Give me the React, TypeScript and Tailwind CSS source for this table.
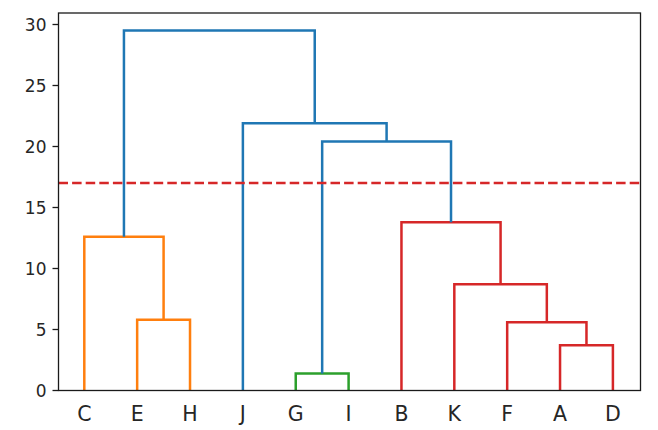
const BLUE = "#1f77b4";
const ORANGE = "#ff7f0e";
const GREEN = "#2ca02c";
const RED = "#d62728";

const X0 = 58.5;
const X1 = 640.5;
const Y_TOP = 13;
const Y_ZERO = 390.5;
const PX_PER_UNIT = 12.2;

const leaves = ["C", "E", "H", "J", "G", "I", "B", "K", "F", "A", "D"];
const lx = (i: number) => 84.3 + i * 52.86;
const ly = (v: number) => Y_ZERO - v * PX_PER_UNIT;

type Link = { x: [number, number, number, number]; y: [number, number, number, number]; color: string };

// scipy-style U links: left leg bottom, left top, right top, right bottom
const mid = (a: number, b: number) => (a + b) / 2;
const eh = mid(lx(1), lx(2));
const cGroup = mid(lx(0), eh);
const gi = mid(lx(4), lx(5));
const ad = mid(lx(9), lx(10));
const fad = mid(lx(8), ad);
const kfad = mid(lx(7), fad);
const red = mid(lx(6), kfad);
const giRed = mid(gi, red);
const jGroup = mid(lx(3), giRed);

const links: Link[] = [
	{ x: [lx(1), lx(1), lx(2), lx(2)], y: [0, 5.8, 5.8, 0], color: ORANGE },
	{ x: [lx(0), lx(0), eh, eh], y: [0, 12.6, 12.6, 5.8], color: ORANGE },
	{ x: [lx(4), lx(4), lx(5), lx(5)], y: [0, 1.4, 1.4, 0], color: GREEN },
	{ x: [lx(9), lx(9), lx(10), lx(10)], y: [0, 3.7, 3.7, 0], color: RED },
	{ x: [lx(8), lx(8), ad, ad], y: [0, 5.6, 5.6, 3.7], color: RED },
	{ x: [lx(7), lx(7), fad, fad], y: [0, 8.7, 8.7, 5.6], color: RED },
	{ x: [lx(6), lx(6), kfad, kfad], y: [0, 13.8, 13.8, 8.7], color: RED },
	{ x: [gi, gi, red, red], y: [1.4, 20.4, 20.4, 13.8], color: BLUE },
	{ x: [lx(3), lx(3), giRed, giRed], y: [0, 21.9, 21.9, 20.4], color: BLUE },
	{ x: [cGroup, cGroup, jGroup, jGroup], y: [12.6, 29.5, 29.5, 21.9], color: BLUE },
];

const yTicks = [0, 5, 10, 15, 20, 25, 30];

export default function App() {
	return (
		<div className="h-[430px] w-[658px] bg-white">
			<svg
				width={658}
				height={430}
				viewBox="0 0 658 430"
				className="block font-['DejaVu_Sans',sans-serif]"
			>
				{links.map((l, i) => (
					<polyline
						key={i}
						points={l.x.map((x, k) => `${x},${ly(l.y[k])}`).join(" ")}
						fill="none"
						stroke={l.color}
						strokeWidth={2.5}
						strokeLinejoin="miter"
						strokeLinecap="butt"
					/>
				))}

				{/* cut threshold */}
				<line
					x1={X0}
					x2={X1}
					y1={ly(17)}
					y2={ly(17)}
					stroke={RED}
					strokeWidth={2.5}
					strokeDasharray="9.5 4.1"
				/>

				{/* axes frame */}
				<rect
					x={X0}
					y={Y_TOP}
					width={X1 - X0}
					height={Y_ZERO - Y_TOP}
					fill="none"
					stroke="#1a1a1a"
					strokeWidth={1.3}
				/>

				{yTicks.map((t) => (
					<g key={t}>
						<line x1={X0 - 6} x2={X0} y1={ly(t)} y2={ly(t)} stroke="#1a1a1a" strokeWidth={1.3} />
						<text x={46.5} y={ly(t) + 6} textAnchor="end" fontSize={17} fill="#262626">
							{t}
						</text>
					</g>
				))}

				{leaves.map((name, i) => (
					<text key={name} x={lx(i)} y={421} textAnchor="middle" fontSize={20.5} fill="#262626">
						{name}
					</text>
				))}
			</svg>
		</div>
	);
}
